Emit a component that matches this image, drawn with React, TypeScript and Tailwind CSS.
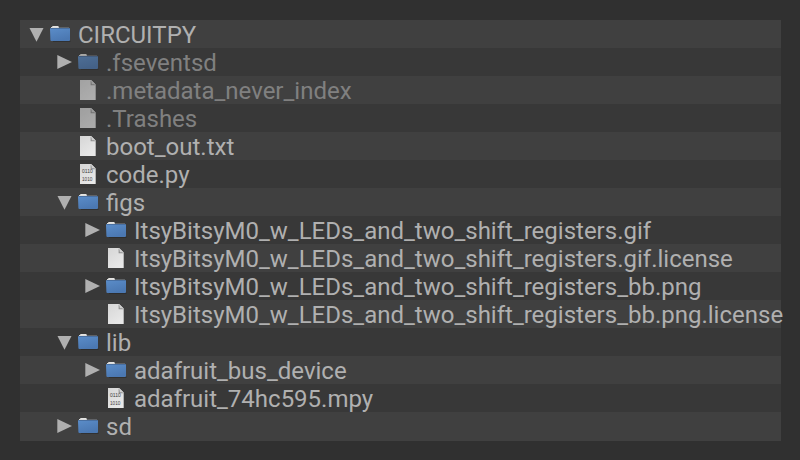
type Kind = 'folder' | 'file' | 'code';

interface Entry {
  name: string;
  depth: number;
  kind: Kind;
  open?: boolean;
  hidden?: boolean;
}

const entries: Entry[] = [
  { name: 'CIRCUITPY', depth: 0, kind: 'folder', open: true },
  { name: '.fseventsd', depth: 1, kind: 'folder', hidden: true },
  { name: '.metadata_never_index', depth: 1, kind: 'file', hidden: true },
  { name: '.Trashes', depth: 1, kind: 'file', hidden: true },
  { name: 'boot_out.txt', depth: 1, kind: 'file' },
  { name: 'code.py', depth: 1, kind: 'code' },
  { name: 'figs', depth: 1, kind: 'folder', open: true },
  { name: 'ItsyBitsyM0_w_LEDs_and_two_shift_registers.gif', depth: 2, kind: 'folder' },
  { name: 'ItsyBitsyM0_w_LEDs_and_two_shift_registers.gif.license', depth: 2, kind: 'file' },
  { name: 'ItsyBitsyM0_w_LEDs_and_two_shift_registers_bb.png', depth: 2, kind: 'folder' },
  { name: 'ItsyBitsyM0_w_LEDs_and_two_shift_registers_bb.png.license', depth: 2, kind: 'file' },
  { name: 'lib', depth: 1, kind: 'folder', open: true },
  { name: 'adafruit_bus_device', depth: 2, kind: 'folder' },
  { name: 'adafruit_74hc595.mpy', depth: 2, kind: 'code' },
  { name: 'sd', depth: 1, kind: 'folder' },
];

const indents = ['pl-0', 'pl-7', 'pl-14'];

function Arrow({ open }: { open?: boolean }) {
  return (
    <svg className="size-7 shrink-0" viewBox="0 0 28 28" fill="#b0b0b0">
      {open ? <path d="M9.5 8H23.5L16.5 21.7Z" /> : <path d="M9.3 7L24 14L9.3 21Z" />}
    </svg>
  );
}

function FolderIcon() {
  return (
    <svg className="size-7 shrink-0" viewBox="0 0 28 28">
      <defs>
        <linearGradient id="folder" x1="0" y1="0" x2="0.4" y2="1">
          <stop offset="0" stopColor="#5b8dc9" />
          <stop offset="1" stopColor="#4b78b2" />
        </linearGradient>
      </defs>
      <path d="M5 20.5H22.5V22H5Z" fill="#222222" opacity="0.5" />
      <path d="M4 8.5V7Q4 6 5 6H10.2L10.8 7V8.5H4Z" fill="#e4e4e2" />
      <path d="M3 7H10.8V9H3Z" fill="#dcdcdc" />
      <path d="M10.8 7.2H21V8.6H10.8Z" fill="#686c72" />
      <path d="M2 9Q2 8 3 8H21Q22 8 22 9V20Q22 21 21 21H3.4Q2.4 21 2.4 20Z" fill="url(#folder)" />
      <path d="M3 8.5H21.4" stroke="#466c9d" strokeWidth="0.9" />
    </svg>
  );
}

function FileIcon({ code }: { code?: boolean }) {
  return (
    <svg className="size-7 shrink-0" viewBox="0 0 28 28">
      <defs>
        <linearGradient id="paper" x1="0" y1="0" x2="0.6" y2="1">
          <stop offset="0" stopColor="#d6d6d6" />
          <stop offset="1" stopColor="#e8e8e8" />
        </linearGradient>
      </defs>
      <path d="M4 4H15.2L19.7 8.4V24H4Z" fill="url(#paper)" />
      <path d="M14.6 4.4L19.5 9.2H14.6Z" fill="#8f8f8f" />
      <path d="M15.2 4.2L19.4 8.3H15.8Z" fill="#cfcfcf" />
      {code && (
        <g fill="#3c3c3c" fontFamily="Liberation Sans, sans-serif" fontSize="5.3">
          <text x="6" y="13.2" textLength="10.8" lengthAdjust="spacingAndGlyphs">0110</text>
          <text x="6" y="21.3" textLength="10.4" lengthAdjust="spacingAndGlyphs">1010</text>
        </g>
      )}
    </svg>
  );
}

function Row({ entry }: { entry: Entry }) {
  return (
    <li className="h-7 w-[761px] odd:bg-[#404040] even:bg-[#383838] last:h-[29px]">
      <div className={`flex h-7 items-center ${indents[entry.depth]}`}>
        {entry.kind === 'folder' ? <Arrow open={entry.open} /> : <span className="w-7 shrink-0" />}
        <div className={`flex h-7 shrink-0 items-center ${entry.hidden ? 'opacity-65' : ''}`}>
          {entry.kind === 'folder' ? <FolderIcon /> : <FileIcon code={entry.kind === 'code'} />}
        </div>
        <span className={`pl-0.5 pt-0.5 whitespace-nowrap ${entry.hidden ? 'text-[#808080]' : 'text-[#b0b0b0]'}`}>
          {entry.name}
        </span>
      </div>
    </li>
  );
}

export default function App() {
  return (
    <main className="h-[460px] w-[800px] overflow-hidden bg-[#303030] p-5 font-['Roboto',sans-serif] text-2xl leading-7">
      <ul>
        {entries.map((entry) => (
          <Row key={entry.name} entry={entry} />
        ))}
      </ul>
    </main>
  );
}
